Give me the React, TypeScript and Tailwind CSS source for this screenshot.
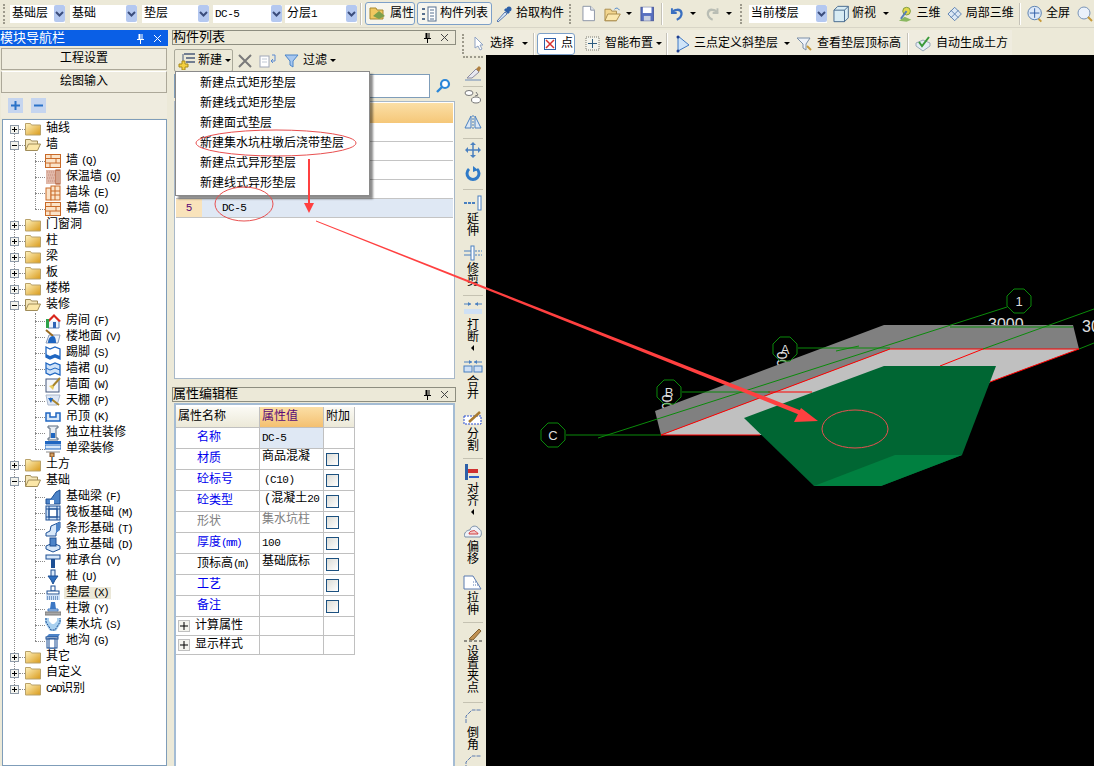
import type { ReactNode } from 'react';

const Lat = ({ children }: { children: ReactNode }) => <span className="text-[11px] tracking-[-1.6px]">{children}</span>;
const Key = ({ children }: { children: ReactNode }) => <span className="ml-[3px] text-[11px] tracking-[-1.6px]">{children}</span>;

function Arrow({ className = '' }: { className?: string }) {
  return <span className={`h-0 w-0 border-x-[3px] border-t-[3px] border-x-transparent border-t-black ${className}`} />;
}

function Sep({ className = '' }: { className?: string }) {
  return <span className={`h-[22px] w-[2px] shrink-0 border-l border-r border-l-[#c5c2b8] border-r-white ${className}`} />;
}

function Grip({ className = '' }: { className?: string }) {
  return <span className={`h-[20px] w-[2px] shrink-0 border-l-2 border-dotted border-[#9d9a8c] ${className}`} />;
}

function Combo({ width, text }: { width: string; text: ReactNode }) {
  return (
    <div className={`flex h-[18px] shrink-0 items-center justify-between bg-white pl-[2px] ${width}`}>
      <span className="whitespace-nowrap">{text}</span>
      <span className="flex h-[17px] w-[11px] items-center justify-center rounded-[2px] bg-[#b4c8f0]">
        <svg width="9" height="6" viewBox="0 0 9 6"><path d="M1 1l3.5 3.5L8 1" fill="none" stroke="#3b4d7c" strokeWidth="2" /></svg>
      </span>
    </div>
  );
}

function FolderClosed() {
  return (
    <svg width="16" height="14" viewBox="0 0 16 14" className="shrink-0">
      <defs><linearGradient id="fc" x1="0" y1="0" x2="1" y2="1"><stop offset="0" stopColor="#fff3c0" /><stop offset="1" stopColor="#d99a1a" /></linearGradient></defs>
      <path d="M.5 3V1.5h5l1 1.5h9v10H.5z" fill="url(#fc)" stroke="#b9a26a" />
    </svg>
  );
}

function FolderOpen() {
  return (
    <svg width="16" height="14" viewBox="0 0 16 14" className="shrink-0">
      <path d="M.5 12V1.5h5l1 1.5h6v3" fill="#f5e6b8" stroke="#a08c58" />
      <path d="M.5 12.5l3-6.5h12l-3 6.5z" fill="#fbe7a8" stroke="#a08c58" />
    </svg>
  );
}

function Brick() {
  return (
    <svg width="16" height="16" viewBox="0 0 16 16">
      <rect x=".5" y="1.5" width="15" height="13" fill="#fbe3c8" stroke="#c96a28" />
      <path d="M1 5.5h14M1 10h14M6 1.5v4M11 5.5V10M5 10v4.5" stroke="#c96a28" fill="none" />
    </svg>
  );
}

const blue = '#1f66c1';

function TreeIcon({ name }: { name: string }) {
  const body: Record<string, ReactNode> = {
    brick: <Brick />,
    insul: (
      <svg width="16" height="16" viewBox="0 0 16 16"><rect x="1" y="1" width="10" height="14" fill="#e0b8a8" /><path d="M2 3h7M3 6h7M2 9h7M3 12h7" stroke="#c98f80" strokeDasharray="1 1" /><rect x="11" y="1" width="4" height="14" fill="#fff" stroke="#a8481c" /><path d="M13 1v14" stroke="#a8481c" /></svg>
    ),
    pier: (
      <svg width="16" height="16" viewBox="0 0 16 16"><rect x="1" y="3" width="5" height="12" fill="#fbe3c8" stroke="#c96a28" /><rect x="6" y="1" width="9" height="14" fill="#fbe3c8" stroke="#c96a28" /><path d="M10 1v14M6 6h9M6 10h9" stroke="#c96a28" /></svg>
    ),
    room: (
      <svg width="16" height="16" viewBox="0 0 16 16"><path d="M3 8v7h11V8" fill="#eef3fb" stroke="#5d7fb5" /><path d="M1 9l8-8 7 7-2 1-5-5-6 6z" fill="#d8261c" /><rect x="1" y="6" width="3" height="9" fill="#2fa24a" /><rect x="8" y="9" width="3" height="6" fill="#2d63b5" /></svg>
    ),
    floor: (
      <svg width="16" height="16" viewBox="0 0 16 16"><path d="M1 14l3-8h11l-2 8z" fill="#eef2f8" stroke="#8a9bb7" /><path d="M1 1l7 6" stroke="#9a6b21" strokeWidth="2" /><path d="M3 14c0-4 2-7 5-7 2 0 3 3 3 7z" fill={blue} /></svg>
    ),
    skirt: (
      <svg width="16" height="16" viewBox="0 0 16 16"><path d="M1 2l4 2 5-2 5 2v10l-5-2-5 2-4-2z" fill="#fff" stroke={blue} strokeWidth="1.3" /><path d="M1 9l4 2 5-2 5 2v3l-5-2-5 2-4-2z" fill={blue} /></svg>
    ),
    dado: (
      <svg width="16" height="16" viewBox="0 0 16 16"><path d="M1 2l4 2 5-2 5 2v10l-5-2-5 2-4-2z" fill="#cfe2f8" stroke={blue} strokeWidth="1.3" /><path d="M1 7l4 2 5-2 5 2" fill="none" stroke={blue} /></svg>
    ),
    wall: (
      <svg width="16" height="16" viewBox="0 0 16 16"><rect x="1" y="2" width="13" height="13" fill="#f4f6fb" stroke="#45597e" /><path d="M15 1l-8 9" stroke="#a8842a" strokeWidth="2" /><path d="M4 9l3-1 2 2-1 3z" fill="#e8cc60" /></svg>
    ),
    ceil: (
      <svg width="16" height="16" viewBox="0 0 16 16"><path d="M1 2h14l-3 10H3z" fill="#dfe8f6" stroke="#a9b6ca" /><path d="M5 5l9 7" stroke="#a8842a" strokeWidth="2" /><path d="M3 5h5l-2 5z" fill={blue} /></svg>
    ),
    drop: (
      <svg width="16" height="16" viewBox="0 0 16 16"><path d="M1 4v8h14V4h-4v4H5V4z" fill="#d8e8f9" stroke={blue} strokeWidth="1.5" /></svg>
    ),
    column: (
      <svg width="16" height="16" viewBox="0 0 16 16"><path d="M3 1h10v2h-2v10h2v2H3v-2h2V3H3z" fill="#e8edf3" stroke="#5a6a7e" /><rect x="6" y="8" width="4" height="5" fill={blue} /></svg>
    ),
    beam: (
      <svg width="16" height="16" viewBox="0 0 16 16"><rect x="0" y="0" width="16" height="3" fill={blue} /><rect x="0" y="4" width="16" height="4" fill="#d8e8f9" stroke={blue} /><path d="M1 11h14" stroke="#8a8a8a" /><rect x="5" y="12" width="4" height="4" fill="#d8a060" stroke="#7a4a20" /></svg>
    ),
    fbeam: (
      <svg width="16" height="16" viewBox="0 0 16 16"><path d="M1 15h14v-5L15 1l-4 2-5 7H1z" fill="#4d84c8" stroke="#1c4f94" /><path d="M5 15v-4h4v4z" fill="#fff" /></svg>
    ),
    raft: (
      <svg width="16" height="16" viewBox="0 0 16 16"><rect x="1" y="1" width="14" height="14" fill="#cfe2f8" stroke="#1c4f94" /><rect x="4" y="4" width="8" height="8" fill="#fff" stroke="#1c4f94" /><path d="M1 4h14M1 12h14M4 1v14M12 1v14" stroke="#1c4f94" /></svg>
    ),
    strip: (
      <svg width="16" height="16" viewBox="0 0 16 16"><path d="M1 15v-3l4-2 1-5 9-4v6l-4 5v3z" fill="#d8e8f9" stroke="#1c4f94" /><path d="M11 3l4-2v8l-4 3z" fill="#4d84c8" /></svg>
    ),
    iso: (
      <svg width="16" height="16" viewBox="0 0 16 16"><path d="M1 9l7-3 7 3v3l-7 3-7-3z" fill="#d8e8f9" stroke="#1c4f94" /><rect x="5" y="1" width="6" height="8" fill="#4d84c8" stroke="#1c4f94" /></svg>
    ),
    cap: (
      <svg width="16" height="16" viewBox="0 0 16 16"><rect x="1" y="2" width="14" height="4" fill="#d8e8f9" stroke="#1c4f94" /><rect x="6" y="6" width="4" height="9" fill="#1c4f94" /></svg>
    ),
    pile: (
      <svg width="16" height="16" viewBox="0 0 16 16"><rect x="6" y="1" width="4" height="7" fill="#d8e8f9" stroke="#1c4f94" /><path d="M3 7h10l-3 4-2 4-2-4z" fill="#2d6fc0" stroke="#1c4f94" /></svg>
    ),
    cushion: (
      <svg width="16" height="16" viewBox="0 0 16 16"><rect x="6" y="1" width="4" height="5" fill="#fff" stroke="#1c4f94" /><rect x="2" y="6" width="12" height="3" fill="#fff" stroke="#1c4f94" /><rect x="1" y="10" width="14" height="5" fill="#cfe2f8" /><path d="M2 12h12M2 14h12" stroke="#1c4f94" strokeDasharray="1 1" /></svg>
    ),
    pier2: (
      <svg width="16" height="16" viewBox="0 0 16 16"><path d="M6 1h4l1 7H5z" fill="#3d78c4" /><path d="M3 8h10v2H3z" fill="#bcd0ea" stroke="#3d78c4" /><rect x="0" y="11" width="16" height="3" fill="#a8a8a8" stroke="#7a7a7a" /></svg>
    ),
    pit: (
      <svg width="16" height="16" viewBox="0 0 16 16"><path d="M0 1h4v3l3 3h2l3-3V1h4v5l-5 8H5L0 6z" fill="#a9d0ef" /><path d="M1 1v4l5 8h4l5-8V1" fill="none" stroke="#1c4f94" strokeDasharray="2 1" /></svg>
    ),
    trench: (
      <svg width="16" height="16" viewBox="0 0 16 16"><path d="M1 4l3-3h11l-2 3z" fill="#4d84c8" /><rect x="1" y="4" width="12" height="2" fill="#fff" stroke="#1c4f94" /><rect x="2" y="6" width="10" height="9" fill="#fff" stroke="#1c4f94" /><rect x="4" y="6" width="6" height="9" fill="#fff" stroke="#1c4f94" /></svg>
    ),
  };
  return <span className="flex h-4 w-4 shrink-0 items-center justify-center">{body[name]}</span>;
}

type Node = { label: ReactNode; open?: boolean; kids?: { icon: string; label: ReactNode; active?: boolean }[] };

const tree: Node[] = [
  { label: '轴线' },
  {
    label: '墙',
    open: true,
    kids: [
      { icon: 'brick', label: <>墙<Key>(Q)</Key></> },
      { icon: 'insul', label: <>保温墙<Key>(Q)</Key></> },
      { icon: 'pier', label: <>墙垛<Key>(E)</Key></> },
      { icon: 'brick', label: <>幕墙<Key>(Q)</Key></> },
    ],
  },
  { label: '门窗洞' },
  { label: '柱' },
  { label: '梁' },
  { label: '板' },
  { label: '楼梯' },
  {
    label: '装修',
    open: true,
    kids: [
      { icon: 'room', label: <>房间<Key>(F)</Key></> },
      { icon: 'floor', label: <>楼地面<Key>(V)</Key></> },
      { icon: 'skirt', label: <>踢脚<Key>(S)</Key></> },
      { icon: 'dado', label: <>墙裙<Key>(U)</Key></> },
      { icon: 'wall', label: <>墙面<Key>(W)</Key></> },
      { icon: 'ceil', label: <>天棚<Key>(P)</Key></> },
      { icon: 'drop', label: <>吊顶<Key>(K)</Key></> },
      { icon: 'column', label: '独立柱装修' },
      { icon: 'beam', label: '单梁装修' },
    ],
  },
  { label: '土方' },
  {
    label: '基础',
    open: true,
    kids: [
      { icon: 'fbeam', label: <>基础梁<Key>(F)</Key></> },
      { icon: 'raft', label: <>筏板基础<Key>(M)</Key></> },
      { icon: 'strip', label: <>条形基础<Key>(T)</Key></> },
      { icon: 'iso', label: <>独立基础<Key>(D)</Key></> },
      { icon: 'cap', label: <>桩承台<Key>(V)</Key></> },
      { icon: 'pile', label: <>桩<Key>(U)</Key></> },
      { icon: 'cushion', label: <>垫层<Key>(X)</Key></>, active: true },
      { icon: 'pier2', label: <>柱墩<Key>(Y)</Key></> },
      { icon: 'pit', label: <>集水坑<Key>(S)</Key></> },
      { icon: 'trench', label: <>地沟<Key>(G)</Key></> },
    ],
  },
  { label: '其它' },
  { label: '自定义' },
  { label: <><Lat>CAD</Lat>识别</> },
];

function Expander({ open }: { open?: boolean }) {
  return (
    <span className="relative z-10 flex h-[9px] w-[9px] items-center justify-center border border-[#8e9aa8] bg-[#f4f4ee]">
      <span className="absolute h-px w-[5px] bg-black" />
      {!open && <span className="absolute h-[5px] w-px bg-black" />}
    </span>
  );
}

function Tree() {
  return (
    <div className="flex-1 overflow-hidden border border-[#7f9db9] bg-white pt-[1px]">
      {tree.map((n, i) => (
        <div key={i} className="relative">
          {i < tree.length - 1 && <span className="absolute bottom-[-8px] left-[11px] top-2 border-l border-dotted border-[#8a8a8a]" />}
          <div className="flex h-4 items-center pl-[7px]">
            <Expander open={n.open} />
            <span className="h-0 w-[6px] border-t border-dotted border-[#8a8a8a]" />
            {n.open ? <FolderOpen /> : <FolderClosed />}
            <span className="ml-[5px] whitespace-nowrap">{n.label}</span>
          </div>
          {n.kids && (
            <div className="relative">
              <span className="absolute bottom-2 left-[32px] top-0 border-l border-dotted border-[#8a8a8a]" />
              {n.kids.map((k, j) => (
                <div key={j} className="flex h-4 items-center pl-[32px]">
                  <span className="h-0 w-[10px] border-t border-dotted border-[#8a8a8a]" />
                  <TreeIcon name={k.icon} />
                  <span className={`ml-[3px] whitespace-nowrap pl-[2px] pr-[3px] ${k.active ? 'bg-[#ebe8d9]' : ''}`}>{k.label}</span>
                </div>
              ))}
            </div>
          )}
        </div>
      ))}
    </div>
  );
}

function PinClose({ light }: { light?: boolean }) {
  const c = light ? '#ffffff' : '#000000';
  return (
    <div className="flex items-center gap-[8px] pr-[6px]">
      <svg width="9" height="11" viewBox="0 0 9 11"><path d="M2.5 1h4v5h1.5v1h-7V6h1.5zM4 7v4h1V7z" fill={c} /><path d="M5 1v5" stroke={light ? '#0a5fe0' : '#ece9d8'} /></svg>
      <svg width="9" height="9" viewBox="0 0 9 9"><path d="M1 1l7 7M8 1L1 8" stroke={light ? '#ffffff' : '#444444'} /></svg>
    </div>
  );
}

function NavPanel() {
  return (
    <div className="flex w-[168px] shrink-0 flex-col pt-[2px]">
      <div className="flex h-[16px] items-center justify-between bg-[#0a5fe6] text-[13px] leading-none text-white">
        <span>模块导航栏</span>
        <PinClose light />
      </div>
      <div className="mx-px mt-[2px] flex h-[22px] items-center justify-center border border-[#aca899] bg-[#efecdf]">工程设置</div>
      <div className="mx-px mt-px flex h-[22px] items-center justify-center border border-[#aca899] border-t-white bg-[#efecdf]">绘图输入</div>
      <div className="mx-px flex h-[25px] items-center gap-[8px] bg-[#efecdf] pl-[7px]">
        <span className="flex h-[15px] w-[15px] items-center justify-center bg-[#c5d5ef]">
          <svg width="11" height="11" viewBox="0 0 11 11"><path d="M5.5 1v9M1 5.5h9" stroke="#2a72c8" strokeWidth="2" /></svg>
        </span>
        <span className="flex h-[15px] w-[15px] items-center justify-center bg-[#c5d5ef]">
          <svg width="11" height="11" viewBox="0 0 11 11"><path d="M1 5.5h9" stroke="#2a72c8" strokeWidth="2" /></svg>
        </span>
      </div>
      <div className="flex min-h-0 flex-1 flex-col pl-[2px] pr-px pt-px">
        <Tree />
      </div>
    </div>
  );
}

function ListPanel() {
  return (
    <div className="relative flex h-[351px] shrink-0 flex-col">
      <div className="mt-[2px] flex h-[15px] items-center justify-between border border-[#8e8e80] text-[13px] leading-none">
        <span>构件列表</span>
        <PinClose />
      </div>
      <div className="mt-[3px] flex h-[25px] items-center pl-[2px]">
        <div className="flex h-[23px] w-[59px] items-center rounded-[2px] border border-[#aaa99a] pl-[3px]">
          <svg width="18" height="18" viewBox="0 0 18 18" className="shrink-0"><path d="M6 2h11M8 6h9M8 10h9" stroke="#4a5a7a" strokeWidth="1.5" /><path d="M5 2v9" stroke="#4a5a7a" /><path d="M4 9v3H1v3h3v3h3v-3h3v-3H7V9z" fill="#f4d040" stroke="#a88a18" /></svg>
          <span className="ml-[2px]">新建</span>
          <Arrow className="ml-[3px]" />
        </div>
        <svg width="14" height="14" viewBox="0 0 14 14" className="ml-[5px]"><path d="M1 1l12 12M13 1L1 13" stroke="#7a7a7a" strokeWidth="2" /></svg>
        <svg width="18" height="16" viewBox="0 0 18 16" className="ml-[7px]"><rect x="1" y="3" width="9" height="11" fill="#fff" stroke="#a0a8b8" /><path d="M3 6h5M3 9h5" stroke="#c0c8d4" /><path d="M13 2h3v6h-4M14 10l-2-2 2-2" fill="none" stroke="#5a8ad0" /></svg>
        <svg width="15" height="14" viewBox="0 0 15 14" className="ml-[7px]"><path d="M1 1h13L9 7v6L6 11V7z" fill="#a8c8f0" stroke="#4a84c8" /></svg>
        <span className="ml-[4px]">过滤</span>
        <Arrow className="ml-[3px]" />
      </div>
      <div className="mt-px flex h-[24px] items-center pl-[2px]">
        <div className="h-[24px] w-[256px] border border-[#7f9db9] bg-white" />
        <svg width="16" height="16" viewBox="0 0 16 16" className="ml-[5px]"><circle cx="10" cy="6" r="4" fill="#fff" stroke="#2a86d8" strokeWidth="2.2" /><path d="M7 9l-5 5" stroke="#2a86d8" strokeWidth="2.4" /></svg>
      </div>
      <div className="ml-[2px] mr-px mt-[3px] flex flex-1 flex-col border border-[#a8b8c8] bg-white p-px">
        <div className="h-[20px] bg-gradient-to-b from-[#fbdfa6] to-[#f5c778]" />
        {[1, 2, 3, 4].map(n => <div key={n} className="h-[19px] border-b border-[#c4c4c4]" />)}
        <div className="flex h-[19px] items-center border-b border-[#c4c4c4] bg-[#dfe8f4]">
          <span className="flex h-full w-[26px] items-center justify-center bg-[#f9e3bb] text-[11px] text-[#5a0a78]">5</span>
          <span className="ml-[20px] text-[11px] tracking-[-0.5px]">DC-5</span>
        </div>
      </div>
      <div className="absolute left-[3px] top-[43px] z-10 flex h-[125px] w-[195px] flex-col justify-center border border-[#8a8a8a] bg-white pl-[24px] shadow-[3px_3px_2px_rgba(0,0,0,0.45)]">
        {['新建点式矩形垫层', '新建线式矩形垫层', '新建面式垫层', '新建集水坑柱墩后浇带垫层', '新建点式异形垫层', '新建线式异形垫层'].map(t => (
          <div key={t} className="flex h-[20px] items-center">{t}</div>
        ))}
      </div>
    </div>
  );
}

const props: { name: ReactNode; color: string; value?: ReactNode; valueClass?: string; check?: boolean; selected?: boolean }[] = [
  { name: '名称', color: 'text-[#0000ee]', value: <span className="text-[11px] tracking-[-0.5px]">DC-5</span>, selected: true },
  { name: '材质', color: 'text-[#0000ee]', value: '商品混凝', valueClass: 'items-start', check: true },
  { name: '砼标号', color: 'text-[#0000ee]', value: <span className="ml-[2px] text-[11px] tracking-[-0.5px]">(C10)</span>, check: true },
  { name: '砼类型', color: 'text-[#0000ee]', value: <span className="ml-[2px]">(混凝土<span className="text-[11px] tracking-[-0.5px]">20</span></span>, valueClass: 'items-start', check: true },
  { name: '形状', color: 'text-[#808080]', value: <span className="text-[#808080]">集水坑柱</span>, valueClass: 'items-start', check: true },
  { name: <>厚度<Lat>(mm)</Lat></>, color: 'text-[#0000ee]', value: <span className="text-[11px] tracking-[-0.5px]">100</span>, check: true },
  { name: <>顶标高<Lat>(m)</Lat></>, color: 'text-black', value: '基础底标', valueClass: 'items-start', check: true },
  { name: '工艺', color: 'text-[#0000ee]', check: true },
  { name: '备注', color: 'text-[#0000ee]', check: true },
];

function Cell({ className = '', children }: { className?: string; children?: ReactNode }) {
  return <div className={`flex overflow-hidden whitespace-nowrap border-b border-r border-[#c0c0c0] ${className}`}>{children}</div>;
}

function PropsPanel() {
  return (
    <div className="flex min-h-0 flex-1 flex-col pt-[8px]">
      <div className="flex h-[15px] items-center justify-between border border-[#8e8e80] text-[13px] leading-none">
        <span>属性编辑框</span>
        <PinClose />
      </div>
      <div className="ml-[2px] mr-px mt-px flex-1 border-2 border-b-0 border-[#a4bcd4] bg-white pt-[2px]">
        <div className="grid w-[179px] grid-cols-[84px_64px_31px]">
          <Cell className="h-[21px] items-center bg-gradient-to-b from-[#fbfaf5] to-[#ece9d8] pl-[2px]">属性名称</Cell>
          <Cell className="h-[21px] items-center bg-gradient-to-b from-[#fbdfa6] to-[#f4c070] pl-[2px] text-[#5a0a78]">属性值</Cell>
          <Cell className="h-[21px] items-center bg-gradient-to-b from-[#fbfaf5] to-[#ece9d8] pl-[2px]">附加</Cell>
          {props.map((p, i) => (
            <div key={i} className="contents">
              <Cell className={`h-[21px] items-center pl-[21px] ${p.color}`}>{p.name}</Cell>
              <Cell className={`h-[21px] pl-[2px] ${p.valueClass ?? 'items-center'} ${p.selected ? 'bg-[#dfe8f4]' : ''}`}>
                <span className="leading-[17px]">{p.value}</span>
              </Cell>
              <Cell className="h-[21px] items-center pl-[2px]">
                {p.check && <span className="h-[13px] w-[13px] border border-[#1c5180] bg-gradient-to-br from-[#dcdcd6] to-white" />}
              </Cell>
            </div>
          ))}
          {['计算属性', '显示样式'].map(t => (
            <div key={t} className="contents">
              <Cell className="h-[19px] items-center pl-[2px]">
                <span className="mr-[5px] flex h-[12px] w-[12px] items-center justify-center border border-[#c0c0c0] bg-[#f4f4ee]">
                  <svg width="8" height="8" viewBox="0 0 8 8"><path d="M4 0v8M0 4h8" stroke="#000" /></svg>
                </span>
                {t}
              </Cell>
              <Cell className="h-[19px]" />
              <Cell className="h-[19px]" />
            </div>
          ))}
        </div>
      </div>
    </div>
  );
}

function TopBar() {
  return (
    <div className="flex h-[28px] shrink-0 items-center border-b border-[#d8d5c6] pl-[3px]">
      <Grip />
      <Combo width="ml-[5px] w-[55px]" text="基础层" />
      <Combo width="ml-[5px] w-[67px]" text="基础" />
      <Combo width="ml-[5px] w-[67px]" text="垫层" />
      <Combo width="ml-[4px] w-[69px]" text={<span className="text-[11px] tracking-[-0.5px]">DC-5</span>} />
      <Combo width="ml-[3px] w-[72px]" text={<>分层<span className="text-[11px]">1</span></>} />
      <Sep className="ml-[3px]" />
      <div className="ml-[3px] flex h-[23px] w-[50px] shrink-0 items-center gap-[3px] whitespace-nowrap rounded-[3px] border border-[#7da0c8] bg-[#f6f5ee] pl-[3px]">
        <svg width="18" height="14" viewBox="0 0 18 14" className="shrink-0"><path d="M1 12V1h6l1 2h6v9z" fill="#f0c860" stroke="#a88a30" /><path d="M4 9l6-5 6 5-6 3z" fill="#7ca04c" /></svg>
        <span>属性</span>
      </div>
      <div className="ml-[2px] flex h-[23px] w-[75px] shrink-0 items-center gap-[3px] rounded-[3px] border border-[#7da0c8] bg-[#f6f5ee] pl-[3px]">
        <svg width="16" height="16" viewBox="0 0 16 16" className="shrink-0"><path d="M1 3h3M1 8h3M1 13h3" stroke="#57708f" strokeWidth="2" /><rect x="7" y="1" width="8" height="14" fill="#fff" stroke="#57708f" /><path d="M9 4h4M9 7h4M9 10h4M9 13h4" stroke="#57708f" /></svg>
        <span className="whitespace-nowrap">构件列表</span>
      </div>
      <svg width="18" height="18" viewBox="0 0 18 18" className="ml-[3px] shrink-0"><path d="M2 16l8-9 2 2-9 8z" fill="#d8e8f8" stroke="#5a7ab0" /><path d="M10 4l4 4" stroke="#2d60a8" strokeWidth="3" /><circle cx="14" cy="4" r="2.5" fill="#2d60a8" /></svg>
      <span className="ml-[3px] whitespace-nowrap">拾取构件</span>
      <Grip className="ml-[5px]" />
      <svg width="14" height="17" viewBox="0 0 14 17" className="ml-[11px]"><path d="M1 1h8l4 4v11H1z" fill="#fff" stroke="#8a93a5" /><path d="M9 1v4h4" fill="#e4e8ef" stroke="#8a93a5" /></svg>
      <svg width="18" height="16" viewBox="0 0 18 16" className="ml-[9px]"><path d="M1 15V3h6l1 2h5v10z" fill="#f3d68e" stroke="#a98c4c" /><path d="M1 15l3-7h13l-4 7z" fill="#fbe8ae" stroke="#a98c4c" /><path d="M11 3c2-2 4-1 5 1" fill="none" stroke="#3a7ac8" /></svg>
      <Arrow className="ml-[4px]" />
      <svg width="15" height="16" viewBox="0 0 15 16" className="ml-[8px]"><rect x="1" y="1" width="13" height="14" fill="#5870c0" stroke="#4a5a9c" /><rect x="3" y="1" width="9" height="6" fill="#fff" /><rect x="4" y="10" width="7" height="5" fill="#c8d0e0" /></svg>
      <Sep className="ml-[7px]" />
      <svg width="15" height="15" viewBox="0 0 15 15" className="ml-[7px]"><path d="M2 2v5h5" fill="none" stroke="#3a6fc0" strokeWidth="2" /><path d="M2 7c2-4 9-5 10 0 .5 3-2 6-5 7" fill="none" stroke="#3a6fc0" strokeWidth="2.4" /></svg>
      <Arrow className="ml-[6px]" />
      <svg width="15" height="15" viewBox="0 0 15 15" className="ml-[9px]"><path d="M13 2v5H8" fill="none" stroke="#b9bdb4" strokeWidth="2" /><path d="M13 7c-2-4-9-5-10 0-.5 3 2 6 5 7" fill="none" stroke="#b9bdb4" strokeWidth="2.4" /></svg>
      <Arrow className="ml-[6px] border-t-[#a8a8a0]" />
      <Grip className="ml-[8px]" />
      <Combo width="ml-[7px] w-[78px]" text="当前楼层" />
      <svg width="17" height="18" viewBox="0 0 17 18" className="ml-[6px]"><path d="M1 5l4-4h11v12l-4 4H1z" fill="#d8ecf4" stroke="#46688c" /><path d="M1 5h11v12M12 5l4-4" fill="none" stroke="#46688c" /></svg>
      <span className="ml-[3px] whitespace-nowrap">俯视</span>
      <Arrow className="ml-[7px]" />
      <svg width="17" height="18" viewBox="0 0 17 18" className="ml-[8px]"><path d="M2 16l6-4 7 3-5 2z" fill="#8ab860" /><circle cx="10" cy="6" r="4" fill="#e4d84c" stroke="#7a9a40" /><path d="M4 14L10 6" stroke="#557fb8" strokeWidth="2" /></svg>
      <span className="ml-[3px] whitespace-nowrap">三维</span>
      <svg width="16" height="16" viewBox="0 0 16 16" className="ml-[7px]"><path d="M8 1l7 7-7 7-7-7z" fill="#dce8f4" stroke="#5a80b0" /><path d="M4 4l8 8M12 4l-8 8" stroke="#5a80b0" /></svg>
      <span className="ml-[3px] whitespace-nowrap">局部三维</span>
      <Sep className="ml-[5px]" />
      <svg width="18" height="18" viewBox="0 0 18 18" className="ml-[5px]"><circle cx="9" cy="8" r="7" fill="#dce8f8" stroke="#5a80b0" /><path d="M9 3v10M4 8h10" stroke="#2f5fa8" /><path d="M13 14l3 3" stroke="#c89a3a" strokeWidth="2" /></svg>
      <span className="ml-[3px] whitespace-nowrap">全屏</span>
      <svg width="18" height="18" viewBox="0 0 18 18" className="ml-[6px] shrink-0"><circle cx="8" cy="8" r="6" fill="#eaf1fa" stroke="#7a95b8" /><path d="M12 12l4 4" stroke="#c89a3a" strokeWidth="2" /></svg>
    </div>
  );
}

function SecondBar() {
  return (
    <div className="flex h-[25px] shrink-0 items-center">
      <div className="flex h-[25px] w-[552px] items-center bg-[#efecdf] pl-[2px] pt-[2px]">
        <Grip />
        <svg width="10" height="15" viewBox="0 0 10 15" className="ml-[10px]"><path d="M1 1v11l3-2 2 4 2-1-2-4h3z" fill="#fff" stroke="#8fa3c4" /></svg>
        <span className="ml-[6px] whitespace-nowrap">选择</span>
        <Arrow className="ml-[8px]" />
        <Sep className="ml-[5px]" />
        <div className="ml-[2px] flex h-[22px] w-[38px] items-center rounded-[3px] border border-[#7da0c8] bg-white pl-[6px]">
          <svg width="12" height="12" viewBox="0 0 12 12"><rect x=".5" y=".5" width="11" height="11" fill="#fff" stroke="#2d60a8" /><path d="M2 2l8 8M10 2l-8 8" stroke="#d83030" strokeWidth="1.5" /></svg>
          <span className="ml-[5px]">点</span>
        </div>
        <svg width="15" height="15" viewBox="0 0 15 15" className="ml-[10px]"><rect x="1" y="1" width="13" height="13" fill="#f4f4ec" stroke="#7a7a70" strokeDasharray="1 1" /><path d="M7.5 3v9M3 7.5h9" stroke="#2d5c80" /></svg>
        <span className="ml-[5px] whitespace-nowrap">智能布置</span>
        <Arrow className="ml-[3px]" />
        <Sep className="ml-[4px]" />
        <svg width="14" height="18" viewBox="0 0 14 18" className="ml-[8px]"><path d="M2 1v15l11-6z" fill="#cfe4f8" stroke="#3f78c4" /><circle cx="2" cy="2" r="1.5" fill="#1f3f90" /><circle cx="2" cy="16" r="1.5" fill="#1f3f90" /></svg>
        <span className="ml-[4px] whitespace-nowrap">三点定义斜垫层</span>
        <Arrow className="ml-[6px]" />
        <svg width="17" height="17" viewBox="0 0 17 17" className="ml-[6px]"><path d="M1 3h13l-4 6v6l-3-2V9z" fill="#eef2f8" stroke="#7a8fa8" /><path d="M11 11l4 4" stroke="#c89a3a" strokeWidth="2" /></svg>
        <span className="ml-[4px] whitespace-nowrap">查看垫层顶标高</span>
        <Sep className="ml-[6px]" />
        <svg width="16" height="16" viewBox="0 0 16 16" className="ml-[6px]"><path d="M1 7l7-3 7 3v3l-7 5-7-5z" fill="#e4ecf4" stroke="#9aa8b8" /><path d="M4 6l3 4 7-9" fill="none" stroke="#3a9a3a" strokeWidth="2" /></svg>
        <span className="ml-[5px] whitespace-nowrap">自动生成土方</span>
      </div>
    </div>
  );
}

function Vertical({ text, arrow, className = '' }: { text: string; arrow?: boolean; className?: string }) {
  return (
    <div className={`flex shrink-0 flex-col items-center text-[12px] leading-[12px] ${className}`}>
      {text.split('').map((c, i) => <span key={i}>{c}</span>)}
      {arrow && <span className="mt-[1px] h-0 w-0 border-y-[3px] border-r-[3px] border-y-transparent border-r-black" />}
    </div>
  );
}

const VSep = ({ className }: { className: string }) => <span className={`h-px w-[20px] shrink-0 bg-[#c5c2b2] ${className}`} />;

const v = {
  eraser: <svg width="18" height="16" viewBox="0 0 18 16"><path d="M1 15h16" stroke="#6a8ab8" /><path d="M3 13l9-9 3 3-7 6z" fill="#e8e8f0" stroke="#8a8aa0" /><path d="M12 4l3-3 2 2-2 4z" fill="#b08040" /></svg>,
  circles: <svg width="18" height="16" viewBox="0 0 18 16"><ellipse cx="5" cy="4" rx="4" ry="2.5" fill="#fff" stroke="#777" /><ellipse cx="12" cy="11" rx="4.5" ry="3" fill="#fff" stroke="#777" /><path d="M12 3l2 3-3 1" fill="none" stroke="#777" /></svg>,
  mirror: <svg width="18" height="16" viewBox="0 0 18 16"><path d="M7 2v12H1zM11 2v12h6z" fill="#dce8f4" stroke="#4a80c0" /><path d="M9 1v14" stroke="#4a80c0" strokeDasharray="2 1" /></svg>,
  move: <svg width="18" height="16" viewBox="0 0 18 16"><path d="M9 1v14M2 8h14" stroke="#4a80c0" strokeWidth="1.5" /><path d="M9 0l3 3H6zM9 16l3-3H6zM1 8l3-3v6zM17 8l-3-3v6z" fill="#4a80c0" /></svg>,
  rotate: <svg width="18" height="16" viewBox="0 0 18 16"><path d="M5 4a6 6 0 1 0 8 0" fill="none" stroke="#2f7ac8" strokeWidth="3" /><path d="M9 1l5 4-5 2z" fill="#2f7ac8" /></svg>,
  extend: <svg width="20" height="16" viewBox="0 0 20 16"><path d="M1 8h11" stroke="#4a80c0" strokeDasharray="3 1" strokeWidth="2" /><rect x="15" y="1" width="3" height="14" fill="#fff" stroke="#4a80c0" /></svg>,
  trim: <svg width="20" height="16" viewBox="0 0 20 16"><path d="M1 6h7M1 10h7" stroke="#4a80c0" /><path d="M12 6h7M12 10h7" stroke="#4a80c0" strokeDasharray="2 1" /><rect x="8" y="1" width="3" height="14" fill="#fff" stroke="#4a80c0" /></svg>,
  split: <svg width="20" height="14" viewBox="0 0 20 14"><path d="M1 3h7M12 3h7M1 11h18" stroke="#4a80c0" /><path d="M5 1l3 2-3 2zM15 1l-3 2 3 2z" fill="#4a80c0" /><rect x="1" y="8" width="18" height="5" fill="#cfe0f4" /></svg>,
  merge: <svg width="20" height="14" viewBox="0 0 20 14"><path d="M1 3h8M11 3h8" stroke="#4a80c0" /><path d="M6 1l3 2-3 2zM14 1l-3 2 3 2z" fill="#4a80c0" /><rect x="1" y="7" width="8" height="6" fill="#cfe0f4" stroke="#4a80c0" /><rect x="11" y="7" width="8" height="6" fill="#cfe0f4" stroke="#4a80c0" /></svg>,
  cut: <svg width="20" height="16" viewBox="0 0 20 16"><rect x="1" y="6" width="17" height="8" fill="#fff" stroke="#2a4ed0" strokeDasharray="2 1" /><path d="M6 12L17 2" stroke="#a87a30" strokeWidth="2.5" /></svg>,
  align: <svg width="18" height="18" viewBox="0 0 18 18"><rect x="1" y="1" width="3" height="16" fill="#2d60a8" /><rect x="4" y="6" width="10" height="4" fill="#d03030" /><path d="M5 14h10" stroke="#3060c8" strokeWidth="2" /></svg>,
  offset: <svg width="20" height="16" viewBox="0 0 20 16"><path d="M2 14c-2-4 2-7 5-7 1-5 7-5 9-1 3 1 3 6 1 8z" fill="#eef2f8" stroke="#7a8fa8" /><path d="M6 11c0-2 2-3 3-3s3-1 3 0 3 1 3 3z" fill="#f4c8c8" stroke="#d04040" /></svg>,
  stretch: <svg width="20" height="16" viewBox="0 0 20 16"><path d="M1 15V2h9l8 13z" fill="#fff" stroke="#5a7ab0" /><path d="M10 8h3M10 11h5" stroke="#5a7ab0" strokeDasharray="1 1" /></svg>,
  grip: <svg width="20" height="16" viewBox="0 0 20 16"><path d="M1 14h18" stroke="#333" strokeDasharray="3 2" /><path d="M6 12L16 2l2 2-8 9z" fill="#c09050" stroke="#806030" /></svg>,
  chamfer: <svg width="18" height="16" viewBox="0 0 18 16"><path d="M2 15V8l6-6h9" fill="none" stroke="#5a7ab0" strokeDasharray="4 1" /></svg>,
};

function SideBar() {
  return (
    <div className="flex w-[26px] shrink-0 flex-col items-center overflow-hidden bg-[#ece9d8] pt-px">
      <span className="h-[2px] w-[20px] shrink-0 border-t-2 border-dotted border-[#9d9a8c]" />
      <div className="mt-[7px] shrink-0">{v.eraser}</div>
      <VSep className="mt-[5px]" />
      <div className="mt-[2px] shrink-0">{v.circles}</div>
      <div className="mt-[9px] shrink-0">{v.mirror}</div>
      <VSep className="mt-[8px]" />
      <div className="mt-[3px] shrink-0">{v.move}</div>
      <div className="mt-[7px] shrink-0">{v.rotate}</div>
      <VSep className="mt-[8px]" />
      <div className="mt-[5px] shrink-0">{v.extend}</div>
      <Vertical text="延伸" className="mt-[3px]" />
      <div className="mt-[7px] shrink-0">{v.trim}</div>
      <Vertical text="修剪" className="mt-[3px]" />
      <VSep className="mt-[7px]" />
      <div className="mt-[5px] shrink-0">{v.split}</div>
      <Vertical text="打断" arrow className="mt-[5px]" />
      <div className="mt-[8px] shrink-0">{v.merge}</div>
      <Vertical text="合并" className="mt-[4px]" />
      <div className="mt-[9px] shrink-0">{v.cut}</div>
      <Vertical text="分割" className="mt-[3px]" />
      <VSep className="mt-[5px]" />
      <div className="mt-[4px] shrink-0">{v.align}</div>
      <Vertical text="对齐" arrow className="mt-[3px]" />
      <div className="mt-[8px] shrink-0">{v.offset}</div>
      <Vertical text="偏移" className="mt-[3px]" />
      <div className="mt-[8px] shrink-0">{v.stretch}</div>
      <Vertical text="拉伸" className="mt-[3px]" />
      <VSep className="mt-[5px]" />
      <div className="mt-[4px] shrink-0">{v.grip}</div>
      <Vertical text="设置夹点" className="mt-[4px]" />
      <VSep className="mt-[7px]" />
      <div className="mt-[5px] shrink-0">{v.chamfer}</div>
      <Vertical text="倒角" className="mt-[4px]" />
      <div className="mt-[2px] shrink-0">{v.chamfer}</div>
    </div>
  );
}

function Bubble({ x, y, t }: { x: number; y: number; t: string }) {
  return (
    <g>
      <polygon
        points={Array.from({ length: 8 }, (_, i) => {
          const a = Math.PI / 8 + (i * Math.PI) / 4;
          return `${x + 13 * Math.cos(a)},${y + 13 * Math.sin(a)}`;
        }).join(' ')}
        fill="none"
        stroke="#0a8a0a"
      />
      <text x={x} y={y + 5} fill="#dcdcdc" fontSize="13" textAnchor="middle" fontFamily="Liberation Sans">{t}</text>
    </g>
  );
}

function Scene() {
  return (
    <svg viewBox="486 55 608 711" className="h-full w-full">
      <text x="988" y="330" fill="#e0e0e0" fontSize="16" fontFamily="Liberation Sans">3000</text>
      <text x="1082" y="332" fill="#e0e0e0" fontSize="16" fontFamily="Liberation Sans">30</text>
      <text x="0" y="0" transform="translate(787,367) rotate(-90)" fill="#e0e0e0" fontSize="14" fontFamily="Liberation Sans">00</text>
      <text x="0" y="0" transform="translate(672,410) rotate(-90)" fill="#e0e0e0" fontSize="14" fontFamily="Liberation Sans">00</text>
      <polygon points="655,411 884,325 1073,325 1079,349 890,349 661,435" fill="#808080" />
      <polygon points="661,435 890,349 1079,349 990,382 962,420 760,435" fill="#c0c0c0" />
      <polygon points="855,378 885,366 896,367 855,382" fill="#9a9a9a" />
      <path d="M661 435L890 349H1079L990 382M661 435H760M940 366L983 349M812 392H768" fill="none" stroke="#ff0000" />
      <polygon points="744,418 884,366 996,366 962,455 881,486 814,486" fill="#006633" />
      <polygon points="814,486 895,455 962,455 881,486" fill="#008040" />
      <path d="M598 438L1007 307M983 349L1094 309M1079 349L1094 343M566 435H661M682 392H770M798 348H890M950 327H1073M836 351L859 346" fill="none" stroke="#0a8a0a" />
      <Bubble x={1019} y={301} t="1" />
      <Bubble x={785} y={349} t="A" />
      <Bubble x={669} y={392} t="B" />
      <Bubble x={553} y={435} t="C" />
    </svg>
  );
}

function Annotations() {
  return (
    <svg viewBox="0 0 1094 766" className="pointer-events-none absolute inset-0 z-20 h-[766px] w-[1094px]">
      <ellipse cx="276" cy="143" rx="80" ry="13" fill="none" stroke="#e85050" />
      <ellipse cx="244" cy="204" rx="29" ry="17" fill="none" stroke="#e85050" />
      <ellipse cx="855" cy="429" rx="33" ry="19" fill="none" stroke="#e85050" />
      <path d="M309 159V205" stroke="#ff4040" strokeWidth="2" />
      <polygon points="304,203 314,203 309,213" fill="#ff4040" />
      <polygon points="316,220.5 807,413 805,417 316,221.5" fill="#ff4040" />
      <polygon points="818,421 794,422 801,408" fill="#ff4040" />
    </svg>
  );
}

export default function App() {
  return (
    <div className="relative flex h-[766px] w-[1094px] flex-col overflow-hidden bg-[#ece9d8] font-['Liberation_Mono','Noto_Sans_CJK_SC',monospace] text-[12px] leading-none text-black">
      <TopBar />
      <div className="flex min-h-0 flex-1">
        <NavPanel />
        <div className="ml-[4px] flex w-[284px] shrink-0 flex-col">
          <ListPanel />
          <PropsPanel />
        </div>
        <div className="ml-[4px] flex min-w-0 flex-1 flex-col pt-[2px]">
          <SecondBar />
          <div className="flex min-h-0 flex-1">
            <SideBar />
            <div className="min-w-0 flex-1 bg-black">
              <Scene />
            </div>
          </div>
        </div>
      </div>
      <Annotations />
    </div>
  );
}
